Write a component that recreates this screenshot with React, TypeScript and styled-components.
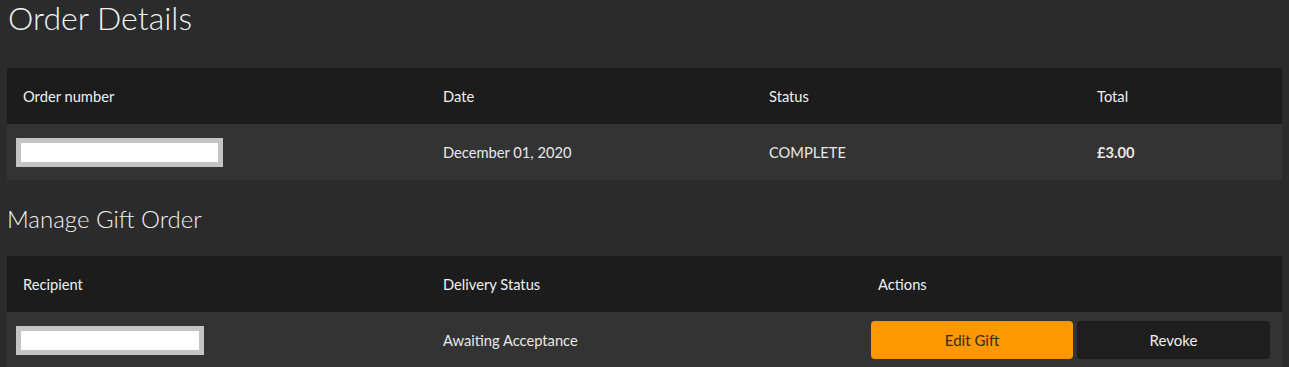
import React from 'react'
import styled, { createGlobalStyle } from 'styled-components'

const GlobalStyle = createGlobalStyle`
  html, body {
    margin: 0;
    padding: 0;
    background: #2b2b2b;
    font-family: Lato, "Open Sans", sans-serif;
    color: #e6e6e6;
  }
`

const Page = styled.div`
  padding: 0 7px 0 7px;
  width: 1275px;
`

const Title = styled.h1`
  margin: 0;
  height: 68px;
  padding-left: 1px;
  font-size: 32px;
  font-weight: 300;
  line-height: 36px;
  color: #f2f2f2;
`

const SubTitle = styled.h2`
  margin: 0;
  height: 76px;
  display: flex;
  align-items: center;
  font-size: 24px;
  font-weight: 300;
  color: #f2f2f2;
`

const Row = styled.div<{ $cols: string; $head?: boolean }>`
  display: grid;
  grid-template-columns: ${p => p.$cols};
  align-items: center;
  height: 56px;
  background: ${p => (p.$head ? '#1c1c1c' : '#333333')};
  font-size: 14.7px;
  color: ${p => (p.$head ? '#f0f0f0' : '#e8e8e8')};
`

const Cell = styled.div<{ $bold?: boolean }>`
  padding-left: 16px;
  font-weight: ${p => (p.$bold ? 700 : 400)};
`

const Redacted = styled.div<{ $w: number }>`
  margin-left: 9px;
  width: ${p => p.$w}px;
  height: 19px;
  background: #ffffff;
  border: 5px solid #c4c4c4;
`

const Actions = styled.div`
  display: flex;
  gap: 4px;
  padding-left: 9px;
`

const Button = styled.button<{ $primary?: boolean; $w: number }>`
  width: ${p => p.$w}px;
  height: 38px;
  border: none;
  border-radius: 4px;
  font-family: Lato, "Open Sans", sans-serif;
  font-size: 15px;
  cursor: pointer;
  background: ${p => (p.$primary ? '#ff9800' : '#1e1e1e')};
  color: ${p => (p.$primary ? '#3a2a10' : '#f0f0f0')};
`

const orderCols = '420px 326px 328px 1fr'
const giftCols = '420px 435px 1fr'

export default function App() {
  return (
    <Page>
      <GlobalStyle />
      <Title>Order Details</Title>
      <Row $cols={orderCols} $head>
        <Cell>Order number</Cell>
        <Cell>Date</Cell>
        <Cell>Status</Cell>
        <Cell>Total</Cell>
      </Row>
      <Row $cols={orderCols}>
        <div>
          <Redacted $w={197} />
        </div>
        <Cell>December 01, 2020</Cell>
        <Cell>COMPLETE</Cell>
        <Cell $bold>£3.00</Cell>
      </Row>
      <SubTitle>Manage Gift Order</SubTitle>
      <Row $cols={giftCols} $head>
        <Cell>Recipient</Cell>
        <Cell>Delivery Status</Cell>
        <Cell>Actions</Cell>
      </Row>
      <Row $cols={giftCols}>
        <div>
          <Redacted $w={178} />
        </div>
        <Cell>Awaiting Acceptance</Cell>
        <Actions>
          <Button $primary $w={202}>Edit Gift</Button>
          <Button $w={193}>Revoke</Button>
        </Actions>
      </Row>
    </Page>
  )
}
